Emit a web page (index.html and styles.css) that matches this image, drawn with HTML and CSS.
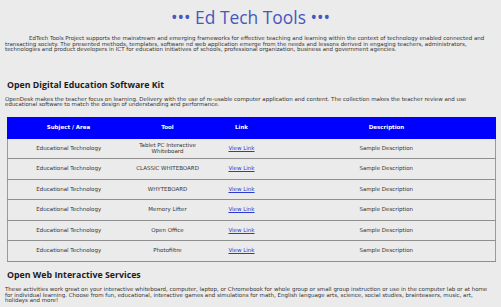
FILE: index.html
```html
<!DOCTYPE html>
<html lang="en">
<head>
  <meta charset="UTF-8" />
  <title>Ed Tech Tools</title>
  <link rel="stylesheet" href="styles.css">
</head>
<body>
<h1 class="site-title">&bull;&bull;&bull; Ed Tech Tools &bull;&bull;&bull;</h1>

<p class="intro">
  EdTech Tools Project supports the mainstream and emerging frameworks for effective teaching and learning within the context of technology enabled connected and transacting society. The presented methods, templates, software nd web application emerge from the needs and lessons derived in engaging teachers, administrators, technologies and product developers in ICT for education initiatives of schools, professional organization, business and government agencies.
</p>

<h2 class="section-title">Open Digital Education Software Kit</h2>
<p class="section-text">
  OpenDesk makes the teacher focus on learning. Delivery with the use of re-usable computer application and content. The collection makes the teacher review and use educational software to match the design of understanding and performance.
</p>

<table class="tools">
  <thead>
    <tr>
      <th class="col-subject">Subject / Area</th>
      <th class="col-tool">Tool</th>
      <th class="col-link">Link</th>
      <th>Description</th>
    </tr>
  </thead>
  <tbody>
    <tr>
      <td>Educational Technology</td>
      <td>Tablet PC Interactive<br>Whiteboard</td>
      <td><a href="#">View Link</a></td>
      <td>Sample Description</td>
    </tr>
    <tr>
      <td>Educational Technology</td>
      <td>CLASSIC WHITEBOARD</td>
      <td><a href="#">View Link</a></td>
      <td>Sample Description</td>
    </tr>
    <tr>
      <td>Educational Technology</td>
      <td>WHYTEBOARD</td>
      <td><a href="#">View Link</a></td>
      <td>Sample Description</td>
    </tr>
    <tr>
      <td>Educational Technology</td>
      <td>Memory Lifter</td>
      <td><a href="#">View Link</a></td>
      <td>Sample Description</td>
    </tr>
    <tr>
      <td>Educational Technology</td>
      <td>Open Office</td>
      <td><a href="#">View Link</a></td>
      <td>Sample Description</td>
    </tr>
    <tr>
      <td>Educational Technology</td>
      <td>Photofiltre</td>
      <td><a href="#">View Link</a></td>
      <td>Sample Description</td>
    </tr>
  </tbody>
</table>

<h2 class="section-title">Open Web Interactive Services</h2>
<p class="section-text">
  These activities work great on your interactive whiteboard, computer, laptop, or Chromebook for whole group or small group instruction or use in the computer lab or at home for individual learning. Choose from fun, educational, interactive games and simulations for math, English language arts, science, social studies, brainteasers, music, art, holidays and more!
</p>
</body>
</html>
```

FILE: styles.css
```css
* {
  box-sizing: border-box;
}

body {
  margin: 0;
  padding: 0 5px;
  background: #ebebeb;
  color: #333333;
  font-family: "DejaVu Sans", Verdana, sans-serif;
  font-size: 5.5px;
  line-height: 5.6px;
}

.site-title {
  margin: 7px 0 9px;
  text-align: center;
  font-family: "Open Sans", "Liberation Sans", sans-serif;
  font-size: 17.4px;
  line-height: 20px;
  font-weight: 400;
  color: #4657bd;
}

.intro {
  margin: 0;
  text-indent: 24px;
}

.section-title {
  margin: 26px 2px 6px;
  font-family: "Open Sans", "Liberation Sans", sans-serif;
  font-size: 8.8px;
  line-height: 12px;
  font-weight: 700;
  color: #1c1c1c;
}

.section-text {
  margin: 0;
}

.tools {
  width: calc(100% - 2px);
  margin: 9px 0 0 2px;
  border-collapse: collapse;
  border: 1px solid #9a9a9a;
}

.tools th {
  height: 21px;
  background: #0000ff;
  color: #ffffff;
  font-weight: 700;
  border: 1px solid #0000ff;
}

.tools td {
  height: 20.5px;
  text-align: center;
  background: #ebebeb;
  border-top: 1px solid #8f8f8f;
  border-bottom: 1px solid #8f8f8f;
}

.col-subject { width: 122px; }
.col-tool { width: 76px; }
.col-link { width: 72px; }

.tools a {
  color: #2a3bd0;
}

.tools + .section-title {
  margin-top: 7px;
}
```
